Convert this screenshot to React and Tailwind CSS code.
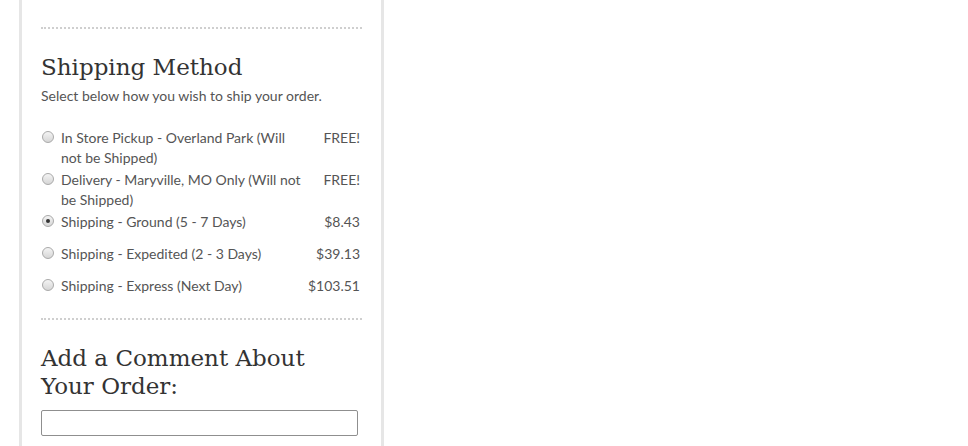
const options = [
  { label: ['In Store Pickup - Overland Park (Will', 'not be Shipped)'], price: 'FREE!' },
  { label: ['Delivery - Maryville, MO Only (Will not', 'be Shipped)'], price: 'FREE!' },
  { label: ['Shipping - Ground (5 - 7 Days)'], price: '$8.43', checked: true },
  { label: ['Shipping - Expedited (2 - 3 Days)'], price: '$39.13' },
  { label: ['Shipping - Express (Next Day)'], price: '$103.51' },
]

function Radio({ checked }) {
  return (
    <span className="mt-[1px] flex h-[12px] w-[12px] shrink-0 items-center justify-center rounded-full border border-[#a9a9a9] bg-linear-to-b from-[#f4f4f4] to-[#d6d6d6]">
      {checked && <span className="h-[4px] w-[4px] rounded-full bg-[#333]" />}
    </span>
  )
}

export default function App() {
  return (
    <div className="h-[446px] overflow-hidden bg-white font-['Lato',sans-serif] text-[#444]">
      <div className="ml-[19px] h-full w-[365px] border-x-[3px] border-[#e6e6e6] bg-white px-[19px] pt-[27px]">
        <div className="border-t-2 border-dotted border-[#cfcfcf]" />

        <h2 className="mt-[22px] font-['DejaVu_Serif',serif] text-[23px] leading-[32px] text-[#333]">
          Shipping Method
        </h2>
        <p className="mt-[5px] text-[14px] leading-[16px] text-[#555]">
          Select below how you wish to ship your order.
        </p>

        <div className="mt-[24px] flex flex-col">
          {options.map((o) => (
            <div
              key={o.label[0]}
              className={`flex items-start text-[14px] leading-[20px] text-[#555] ${o.label.length === 2 ? 'h-[42px]' : 'h-[32px]'}`}
            >
              <span className="ml-[1px] mt-[2px] w-[19px]">
                <Radio checked={o.checked} />
              </span>
              <span className="whitespace-nowrap">
                {o.label.map((l, i) => (
                  <span key={i} className="block">{l}</span>
                ))}
              </span>
              <span className="ml-auto pr-[2px]">{o.price}</span>
            </div>
          ))}
        </div>

        <div className="mt-[10px] border-t-2 border-dotted border-[#cfcfcf]" />

        <h2 className="mt-[24px] font-['DejaVu_Serif',serif] text-[23px] leading-[28px] text-[#333]">
          Add a Comment About
          <br />
          Your Order:
        </h2>
        <input
          type="text"
          className="mt-[10px] block h-[26px] w-[317px] rounded-[2px] border border-[#8f8f8f] bg-white"
        />
      </div>
    </div>
  )
}
